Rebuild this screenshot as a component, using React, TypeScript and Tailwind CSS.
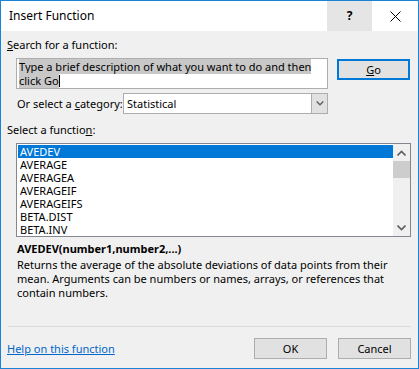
const fns = ['AVEDEV', 'AVERAGE', 'AVERAGEA', 'AVERAGEIF', 'AVERAGEIFS', 'BETA.DIST', 'BETA.INV']

function Chevron({ up, className }: { up?: boolean; className?: string }) {
  return (
    <svg width="9" height="6" viewBox="0 0 9 6" className={className}>
      <path
        d={up ? 'M0.5 5.5 L4.5 1.5 L8.5 5.5' : 'M0.5 0.5 L4.5 4.5 L8.5 0.5'}
        fill="none"
        stroke="currentColor"
        strokeWidth="1.6"
      />
    </svg>
  )
}

export default function App() {
  return (
    <div
      className="flex h-[369px] w-[419px] flex-col border border-[#1883d7] bg-[#f0f0f0] text-[11px] leading-[14px] whitespace-nowrap text-black"
      style={{ fontFamily: '"Noto Sans", "Open Sans", sans-serif' }}
    >
      {/* title bar */}
      <div className="flex h-[30px] shrink-0 items-center bg-white">
        <span className="ml-[8px] flex-1 text-[12px]">Insert Function</span>
        <div className="flex h-[30px] w-[45px] items-center justify-center bg-[#e5e5e5] text-[12px] font-bold">
          ?
        </div>
        <div className="flex h-[30px] w-[46px] items-center justify-center">
          <svg width="11" height="11" viewBox="0 0 11 11">
            <path d="M0.5 0.5 L10.5 10.5 M10.5 0.5 L0.5 10.5" stroke="#000" strokeWidth="1" />
          </svg>
        </div>
      </div>

      <div className="flex flex-1 flex-col px-[6px]">
        <div className="mt-[7px]">
          <span className="underline">S</span>earch for a function:
        </div>

        <div className="mt-[6px] flex items-start pl-[9px]">
          <div className="h-[31px] w-[312px] border border-[#adadad] bg-white px-[2px] pt-px leading-[13px]">
            <span className="bg-[#c8c8c8]">Type a brief description of what you want to do and then</span>
            <br />
            <span className="bg-[#c8c8c8]">click Go</span>
            <span className="inline-block h-[12px] w-px translate-y-[2px] bg-black" />
          </div>
          <div className="ml-[9px] mt-px flex h-[21px] w-[73px] items-center justify-center border-2 border-[#0078d7] bg-[#e1e1e1]">
            <span className="underline">G</span>o
          </div>
        </div>

        <div className="mt-[4px] flex items-center pl-[10px]">
          <span className="w-[106px]">
            Or select a <span className="underline">c</span>ategory:
          </span>
          <div className="flex h-[21px] w-[205px] items-stretch border border-[#adadad] bg-white">
            <span className="flex-1 pl-[3px] leading-[19px]">Statistical</span>
            <div className="flex w-[16px] items-center justify-center border-l border-[#adadad] bg-[#e1e1e1] text-[#606060]">
              <Chevron className="h-[5px] w-[8px]" />
            </div>
          </div>
        </div>

        <div className="mt-[9px]">
          Select a functio<span className="underline">n</span>:
        </div>

        <div className="ml-[9px] mt-[6px] flex h-[94px] w-[395px] border border-[#828790] bg-white">
          <div className="flex-1 pl-px pt-px">
            {fns.map((f, i) => (
              <div
                key={f}
                className={
                  i === 0
                    ? 'h-[13px] bg-[#0078d7] pl-[2px] leading-[13px] text-white'
                    : 'h-[13px] pl-[2px] leading-[13px]'
                }
              >
                {f}
              </div>
            ))}
          </div>
          <div className="flex w-[17px] flex-col bg-[#f0f0f0] text-[#606060]">
            <div className="flex h-[17px] items-center justify-center">
              <Chevron up />
            </div>
            <div className="h-[17px] bg-[#cdcdcd]" />
            <div className="flex-1" />
            <div className="flex h-[17px] items-center justify-center">
              <Chevron />
            </div>
          </div>
        </div>

        <div className="mt-[5px] pl-[10px] font-bold">AVEDEV(number1,number2,...)</div>
        <div className="mt-[2px] pl-[10px]">
          Returns the average of the absolute deviations of data points from their
          <br />
          mean. Arguments can be numbers or names, arrays, or references that
          <br />
          contain numbers.
        </div>

        <div className="flex-1" />
        <div className="mx-px h-px bg-[#dcdcdc]" />

        <div className="mb-[9px] mt-[11px] flex items-center">
          <span className="flex-1 text-[#0066cc] underline">Help on this function</span>
          <div className="flex h-[21px] w-[73px] items-center justify-center border border-[#adadad] bg-[#e1e1e1]">
            OK
          </div>
          <div className="ml-[11px] mr-[1px] flex h-[21px] w-[73px] items-center justify-center border border-[#adadad] bg-[#e1e1e1]">
            Cancel
          </div>
        </div>
      </div>
    </div>
  )
}
